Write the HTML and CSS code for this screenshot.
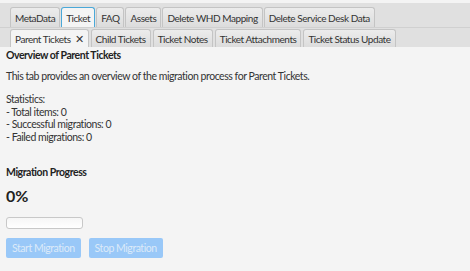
FILE: index.html
```html
<!DOCTYPE html>
<html>
<head>
<meta charset="utf-8">
<link rel="stylesheet" href="styles.css">
</head>
<body>
<div class="outer-header">
  <div class="tab">MetaData</div>
  <div class="tab selected focused">Ticket</div>
  <div class="tab">FAQ</div>
  <div class="tab">Assets</div>
  <div class="tab">Delete WHD Mapping</div>
  <div class="tab">Delete Service Desk Data</div>
</div>
<div class="inner-header">
  <div class="tab selected">Parent Tickets <span class="close">✕</span></div>
  <div class="tab">Child Tickets</div>
  <div class="tab">Ticket Notes</div>
  <div class="tab">Ticket Attachments</div>
  <div class="tab">Ticket Status Update</div>
</div>
<div class="content">
  <div class="title">Overview of Parent Tickets</div>
  <div class="desc">This tab provides an overview of the migration process for Parent Tickets.</div>
  <div class="stats">
    <div>Statistics:</div>
    <div>- Total items: 0</div>
    <div>- Successful migrations: 0</div>
    <div>- Failed migrations: 0</div>
  </div>
  <div class="title progress-title">Migration Progress</div>
  <div class="percent">0%</div>
  <div class="bar"></div>
  <div class="buttons">
    <div class="btn">Start Migration</div>
    <div class="btn">Stop Migration</div>
  </div>
</div>
</body>
</html>
```

FILE: styles.css
```css
html, body {
  margin: 0;
  padding: 0;
  background: #f4f4f4;
  font-family: Lato, "Open Sans", sans-serif;
  font-size: 10.5px;
  letter-spacing: -0.45px;
  color: #333;
}
.outer-header {
  margin-top: 3px;
  background: #e0e0e0;
  display: flex;
  gap: 1px;
  padding: 4px 0 0 10px;
  height: 20px;
  border-bottom: 1px solid #d0d0d0;
}
.inner-header {
  background: #e0e0e0;
  display: flex;
  gap: 2px;
  padding: 1px 0 0 10px;
  height: 18px;
}
.tab {
  box-sizing: border-box;
  border: 1px solid #c4c4c4;
  border-bottom: none;
  border-radius: 3px 3px 0 0;
  background: linear-gradient(#ececec, #dcdcdc);
  padding: 0 4px;
  font-size: 10px;
  display: flex;
  align-items: center;
  color: #333;
  white-space: nowrap;
}
.outer-header .tab { height: 20px; }
.inner-header .tab { height: 18px; }
.tab.selected {
  background: #f4f4f4;
}
.tab.focused {
  border: 1px solid #4aa8d8;
  border-bottom: none;
}
.close { margin-left: 4px; font-size: 11px; letter-spacing: 0; }
.content {
  padding: 1px 6px;
}
.title {
  font-weight: bold;
  color: #222;
  line-height: 14px;
}
.desc {
  margin-top: 7px;
  line-height: 14px;
}
.stats {
  margin-top: 10px;
  line-height: 12.5px;
}
.progress-title {
  margin-top: 22px;
}
.percent {
  margin-top: 6px;
  font-size: 16px;
  font-weight: bold;
  letter-spacing: 0;
  color: #222;
  line-height: 22px;
}
.bar {
  margin-top: 10px;
  width: 77px;
  height: 12px;
  box-sizing: border-box;
  border: 1px solid #c8c8c8;
  border-radius: 3px;
  background: linear-gradient(#f6f6f6, #ffffff);
}
.buttons {
  margin-top: 9px;
  display: flex;
  gap: 8px;
}
.btn {
  background: #99c8f8;
  color: #dceaf9;
  border-radius: 2px;
  height: 20px;
  padding: 0 6px;
  display: flex;
  align-items: center;
}
```
